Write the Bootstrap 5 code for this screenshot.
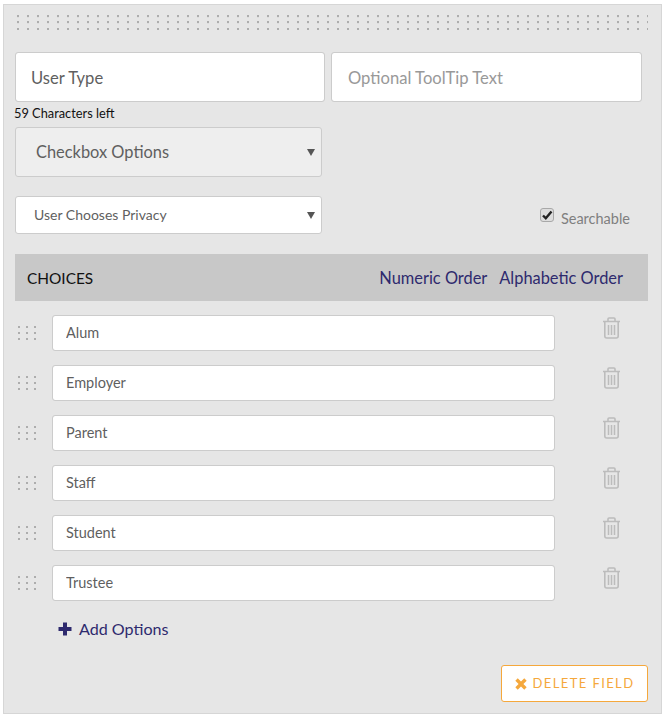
<!DOCTYPE html>
<html lang="en">
<head>
<meta charset="utf-8">
<title>Field editor</title>
<link href="https://cdn.jsdelivr.net/npm/bootstrap@5.3.0/dist/css/bootstrap.min.css" rel="stylesheet">
<style>
html,body{background:#fff;margin:0}
body{font-family:"Lato","Noto Sans",sans-serif;color:#555;padding:4px 3px 4px 3px}
.field-panel{width:659px;height:710px;background:#e6e6e6;border:1px solid #d6d6d6;padding:11px 12px 0 11px}
.dot-strip{height:15px;margin:-1px 0 0 2px;width:631px;background-image:url("data:image/svg+xml,%3Csvg xmlns='http://www.w3.org/2000/svg' width='10' height='6.5'%3E%3Crect width='2' height='2' fill='%23adadad'/%3E%3C/svg%3E");background-size:10px 6.5px}
.name-row{margin-top:22px;gap:6px}
.name-input{width:310px;height:50px;font-size:16.6px;padding:2px 15px 0;border:1px solid #ccc;border-radius:3px;color:#5f5f5f}
.name-input.tip{width:311px;padding-left:16px}
.name-input::placeholder{color:#999}
.chars-left{font-size:12.8px;color:#111;line-height:18px;margin:2px 0 5px -1px}
.type-select,.privacy-select{width:307px;border:1px solid #ccc;border-radius:3px;color:#5f5f5f;background-image:url("data:image/svg+xml,%3Csvg xmlns='http://www.w3.org/2000/svg' width='8' height='8'%3E%3Cpath d='M0 1h8L4 8z' fill='%23555'/%3E%3C/svg%3E");background-size:8px 8px;background-position:right 6px center}
.type-select{height:50px;font-size:16.4px;padding:0 20px;background-color:#eee}
.privacy-select{height:38px;font-size:14px;padding:0 18px 2px;background-color:#fff}
.privacy-row{margin-top:19px;width:615px}
.search-check{font-size:14.5px;color:#7f7f7f;line-height:20px;margin-top:7px}
.search-check input{appearance:none;flex:none;width:14px;height:14px;margin:0 6px 0 0;position:relative;top:-4px;left:-1px;border:1px solid #a8a8a8;border-radius:3px;background:#ddd url("data:image/svg+xml,%3Csvg xmlns='http://www.w3.org/2000/svg' viewBox='0 0 12 12'%3E%3Cpath d='M2 6.500l2.800 2.800L10.500 2.500' fill='none' stroke='%23222' stroke-width='2.400'/%3E%3C/svg%3E") center/12px 12px no-repeat}
.choices-band{margin-top:20px;height:47px;width:633px;background:#c8c8c8;padding:2px 25px 0 12px;font-size:16.4px}
.choices-title{color:#111;font-size:15.4px}
.order-link{color:#2e2a6e;text-decoration:none;margin-left:12px}
.option-list{margin-top:14px;width:633px}
.option-row{height:36px;margin-bottom:14px}
.grip{width:18px;height:14px;margin:0 16px 0 3px;background-image:url("data:image/svg+xml,%3Csvg xmlns='http://www.w3.org/2000/svg' width='8' height='6'%3E%3Crect width='2' height='2' fill='%23adadad'/%3E%3C/svg%3E");background-size:8px 6px;flex:none}
.option-input{width:503px;height:36px;font-size:14.5px;padding:0 13px 2px;border:1px solid #ccc;border-radius:3px;color:#5f5f5f;flex:none}
.trash-btn{margin-left:47px;margin-top:-11px;line-height:0;color:#bcbcbc;background:none;border:0;padding:0}
.add-link{margin:2px 0 0 43px;font-size:16.1px;color:#2e2a6e;text-decoration:none;gap:7px}
.delete-btn{margin:23px 1px 0 0;width:147px;height:37px;background:#fff;border:1px solid #f5a83c;border-radius:3px;color:#f5a83c;font-size:13px;letter-spacing:1.4px;padding:0;gap:6px}
</style>
</head>
<body>
<div class="field-panel">
  <div class="dot-strip"></div>
  <div class="d-flex name-row">
    <input class="form-control name-input" type="text" value="User Type" aria-label="Field name">
    <input class="form-control name-input tip" type="text" placeholder="Optional ToolTip Text" aria-label="Tooltip">
  </div>
  <div class="chars-left">59 Characters left</div>
  <select class="form-select type-select" aria-label="Field type"><option>Checkbox Options</option></select>
  <div class="d-flex justify-content-between privacy-row">
    <select class="form-select privacy-select" aria-label="Privacy"><option>User Chooses Privacy</option></select>
    <label class="search-check d-flex align-items-center"><input type="checkbox" checked>Searchable</label>
  </div>
  <div class="choices-band d-flex align-items-center justify-content-between">
    <span class="choices-title">CHOICES</span>
    <span><a class="order-link" href="#">Numeric Order</a><a class="order-link" href="#">Alphabetic Order</a></span>
  </div>
  <div class="option-list">
    <div class="option-row d-flex align-items-center"><span class="grip"></span><input class="form-control option-input" value="Alum" aria-label="Choice"><button class="trash-btn" aria-label="Delete"><svg width="19" height="22" viewBox="0 0 19 22" fill="none" stroke="currentColor"><path d="M1 4.5h17M6 4.500V2a1 1 0 0 1 1-1h5a1 1 0 0 1 1 1v2.500" stroke-width="1.600"/><path d="M2.800 4.500V19a2 2 0 0 0 2 2h9.400a2 2 0 0 0 2-2V4.500" stroke-width="1.600"/><path d="M6.500 8v10M9.500 8v10M12.500 8v10" stroke-width="1.500"/></svg></button></div>
    <div class="option-row d-flex align-items-center"><span class="grip"></span><input class="form-control option-input" value="Employer" aria-label="Choice"><button class="trash-btn" aria-label="Delete"><svg width="19" height="22" viewBox="0 0 19 22" fill="none" stroke="currentColor"><path d="M1 4.5h17M6 4.500V2a1 1 0 0 1 1-1h5a1 1 0 0 1 1 1v2.500" stroke-width="1.600"/><path d="M2.800 4.500V19a2 2 0 0 0 2 2h9.400a2 2 0 0 0 2-2V4.500" stroke-width="1.600"/><path d="M6.500 8v10M9.500 8v10M12.500 8v10" stroke-width="1.500"/></svg></button></div>
    <div class="option-row d-flex align-items-center"><span class="grip"></span><input class="form-control option-input" value="Parent" aria-label="Choice"><button class="trash-btn" aria-label="Delete"><svg width="19" height="22" viewBox="0 0 19 22" fill="none" stroke="currentColor"><path d="M1 4.5h17M6 4.500V2a1 1 0 0 1 1-1h5a1 1 0 0 1 1 1v2.500" stroke-width="1.600"/><path d="M2.800 4.500V19a2 2 0 0 0 2 2h9.400a2 2 0 0 0 2-2V4.500" stroke-width="1.600"/><path d="M6.500 8v10M9.500 8v10M12.500 8v10" stroke-width="1.500"/></svg></button></div>
    <div class="option-row d-flex align-items-center"><span class="grip"></span><input class="form-control option-input" value="Staff" aria-label="Choice"><button class="trash-btn" aria-label="Delete"><svg width="19" height="22" viewBox="0 0 19 22" fill="none" stroke="currentColor"><path d="M1 4.5h17M6 4.500V2a1 1 0 0 1 1-1h5a1 1 0 0 1 1 1v2.500" stroke-width="1.600"/><path d="M2.800 4.500V19a2 2 0 0 0 2 2h9.400a2 2 0 0 0 2-2V4.500" stroke-width="1.600"/><path d="M6.500 8v10M9.500 8v10M12.500 8v10" stroke-width="1.500"/></svg></button></div>
    <div class="option-row d-flex align-items-center"><span class="grip"></span><input class="form-control option-input" value="Student" aria-label="Choice"><button class="trash-btn" aria-label="Delete"><svg width="19" height="22" viewBox="0 0 19 22" fill="none" stroke="currentColor"><path d="M1 4.5h17M6 4.500V2a1 1 0 0 1 1-1h5a1 1 0 0 1 1 1v2.500" stroke-width="1.600"/><path d="M2.800 4.500V19a2 2 0 0 0 2 2h9.400a2 2 0 0 0 2-2V4.500" stroke-width="1.600"/><path d="M6.500 8v10M9.500 8v10M12.500 8v10" stroke-width="1.500"/></svg></button></div>
    <div class="option-row d-flex align-items-center"><span class="grip"></span><input class="form-control option-input" value="Trustee" aria-label="Choice"><button class="trash-btn" aria-label="Delete"><svg width="19" height="22" viewBox="0 0 19 22" fill="none" stroke="currentColor"><path d="M1 4.5h17M6 4.500V2a1 1 0 0 1 1-1h5a1 1 0 0 1 1 1v2.500" stroke-width="1.600"/><path d="M2.800 4.500V19a2 2 0 0 0 2 2h9.400a2 2 0 0 0 2-2V4.500" stroke-width="1.600"/><path d="M6.500 8v10M9.500 8v10M12.500 8v10" stroke-width="1.500"/></svg></button></div>
  </div>
  <a class="add-link d-inline-flex align-items-center" href="#"><svg width="14" height="14" viewBox="0 0 14 14" fill="#2e2a6e"><path d="M5 0.500h4V5h4.500v4H9v4.500H5V9H0.500V5H5z"/></svg>Add Options</a>
  <div class="d-flex justify-content-end">
    <button class="btn delete-btn d-flex align-items-center justify-content-center"><svg width="12" height="12" viewBox="0 0 11 11" fill="#f5a83c"><path d="M2.500 0.300 5.500 3.300 8.500 0.300 10.700 2.500 7.700 5.500 10.700 8.500 8.500 10.700 5.500 7.700 2.500 10.700 0.300 8.500 3.300 5.500 0.300 2.500z"/></svg>DELETE FIELD</button>
  </div>
</div>
</body>
</html>
